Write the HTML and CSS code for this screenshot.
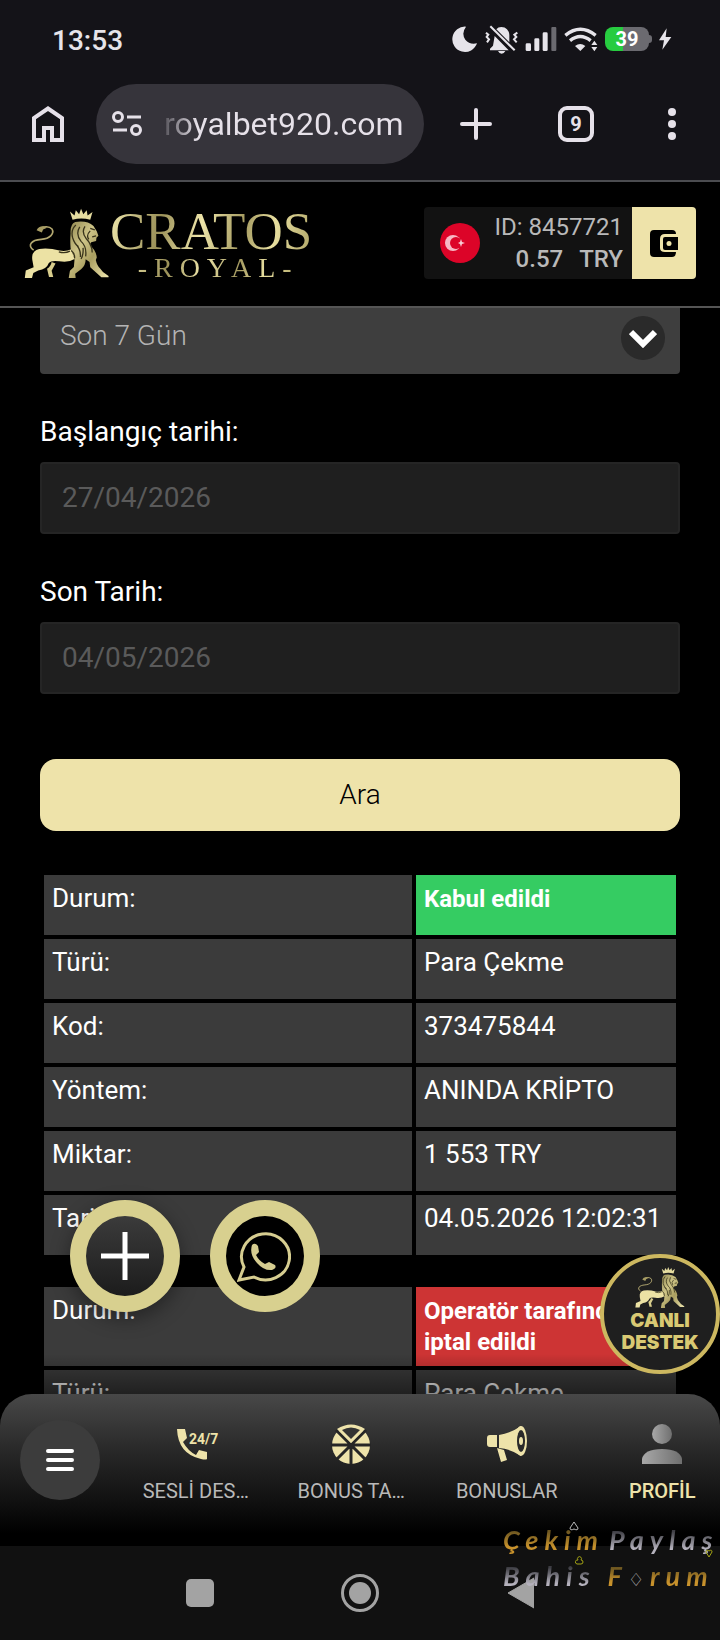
FILE: index.html
```html
<!DOCTYPE html>
<html lang="tr">
<head>
    <meta charset="UTF-8">
    <meta name="viewport" content="width=device-width, initial-scale=1.0">
    <title>Cratos Royal</title>
    <link rel="stylesheet" href="styles.css">
</head>
<body>
    <!-- ortak aslan simgesi -->
    <svg class="defs" width="0" height="0" aria-hidden="true">
        <defs>
            <linearGradient id="gold" x1="0" y1="0" x2="1" y2="1">
                <stop offset="0" stop-color="#8f864f"/>
                <stop offset=".35" stop-color="#cfc588"/>
                <stop offset=".6" stop-color="#a99e60"/>
                <stop offset="1" stop-color="#f3ebb4"/>
            </linearGradient>
            <linearGradient id="silver" x1="0" y1="0" x2="1" y2="0">
                <stop offset="0" stop-color="#a8a8a8"/>
                <stop offset="1" stop-color="#6f6f6f"/>
            </linearGradient>
        </defs>
        <symbol id="lion" viewBox="74 82 262 214">
            <path d="M222 118 214 93l14 12 4-16 10 12 6-17 7 17 10-12 3 16 15-11-7 24q-27-8-54 0z" fill="#e6dda0"/>
            <path d="M103 211C82 196 96 180 126 178c28-2 41-18 33-32-8-9-26-8-36-2" fill="none" stroke="#b3a870" stroke-width="5"/>
            <path d="M112 150q6-13 22-12l10 4-12 6-4 9z" fill="#a79c63"/>
            <path d="M120 207q30-4 62 5 20 4 36-4l10 30q-18 12-47 7-24-4-32 6-6 18-32 22l-15 8-4 15H76l3-23 24-10-4-22q-4-28 21-34z" fill="#ece2a4"/>
            <path d="M216 205q-2-24 0-45-2-28 14-35 36-6 56 12l10 16 5 14-6 6-1 10-15 4-5 8q20 16 22 38l-3 8q4 18 14 27l8 10 17 12v4h-22l-34-31-2-16-12-8q0 20-14 30l-18 14 2 17-21 2-1-5 4-23 12-12 2-22z" fill="url(#gold)"/>
            <path d="M158 247l12 5-12 22 5 19h-13l-6-25q12-8 14-21z" fill="#d8cd8c"/>
            <path d="M180 216q18 6 34-2M232 134q-16 14-10 38 6 20 18 28M244 140q-14 22 4 44 18 16 14 46M260 138q-12 18 4 38 18 18 18 42M276 152q-14 14-4 26M230 190q18 18 16 42M276 144l14 5M282 170l12-3M218 212q12 10 10 24M254 204q2 20-6 34" fill="none" stroke="#39341b" stroke-width="4"/>
        </symbol>
    </svg>

    <div class="status-bar">
        <span class="clock">13:53</span>
        <div class="status-icons">
            <svg width="26" height="26" viewBox="276 78 78 78" fill="#e6e4ea"><path d="M318 80a38 38 0 1 0 33 50q-22 5-35-11-13-19 2-39z"/></svg>
            <svg width="33" height="29" viewBox="373 70 99 87" fill="#e6e4ea">
                <path d="M407 83q5-7 15-7 22 1 24 24v22zM402 103l42 43h-56v-5l9-9zM412 148h22q-4 8-11 8t-11-8z"/>
                <path d="M389 74l73 72" stroke="#e6e4ea" stroke-width="6"/>
                <path d="M376 93l7 6-5 7 7 7-6 9M470 93l-9 6 6 7-7 7 8 9" fill="none" stroke="#e6e4ea" stroke-width="6"/>
            </svg>
            <svg width="32" height="26" viewBox="497 78 96 78" fill="#e6e4ea"><rect x="499" y="130" width="16" height="23" rx="4"/><rect x="525" y="115" width="15" height="38" rx="4"/><rect x="550" y="97" width="15" height="56" rx="4"/><rect x="576" y="81" width="15" height="72" rx="3" fill="#6b6a70"/></svg>
            <svg width="34" height="26" viewBox="617 78 102 78">
                <path d="M621 106q45-36 91 0M635 122q31-25 62 0" fill="none" stroke="#e6e4ea" stroke-width="10"/>
                <path d="M650 138q16-12 31 0l-15 15zM708 122l9 13h-18zM708 154l9-13h-18z" fill="#e6e4ea"/>
            </svg>
            <span class="battery">39</span>
            <svg width="13" height="22" viewBox="895 85 39 66" fill="#e6e4ea"><path d="M918 86l-23 36h15l-5 28 27-38h-17z"/></svg>
        </div>
    </div>

    <div class="toolbar">
        <button class="tool" aria-label="Ana sayfa"><svg width="32" height="36" viewBox="0 0 32 36" fill="none" stroke="#e6e1e9" stroke-width="4"><path d="M2 34V12L16 2.500 30 12v22H20V22h-8v12z"/></svg></button>
        <button class="address">
            <svg width="30" height="26" viewBox="0 0 30 26" fill="none" stroke="#e6e1e9" stroke-width="3"><circle cx="6" cy="6" r="4.500"/><path d="M15 6h14M1 19h14"/><circle cx="24" cy="19" r="4.500"/></svg>
            <span>royalbet920.com</span>
        </button>
        <button class="tool wide" aria-label="Yeni sekme"><svg width="32" height="32" viewBox="0 0 32 32" stroke="#e6e1e9" stroke-width="4" stroke-linecap="round"><path d="M16 2v28M2 16h28"/></svg></button>
        <button class="tool tabs" aria-label="Sekmeler"><span>9</span></button>
        <button class="tool" aria-label="Menü"><svg width="8" height="32" viewBox="0 0 8 32" fill="#e6e1e9"><circle cx="4" cy="4" r="4"/><circle cx="4" cy="16" r="4"/><circle cx="4" cy="28" r="4"/></svg></button>
    </div>

    <header>
        <a class="logo" href="#">
            <svg width="86" height="70"><use href="#lion"/></svg>
            <span class="logo-text">
                <b>CRATOS</b>
                <i>-ROYAL-</i>
            </span>
        </a>
        <div class="account">
            <svg width="40" height="40" viewBox="0 0 40 40"><circle cx="20" cy="20" r="20" fill="#dc0428"/><circle cx="13" cy="20" r="8" fill="#f7b8c4"/><circle cx="16" cy="20" r="6" fill="#dc0428"/><path d="M21 16l1 3 3 1-3 1-1 3-1-3-2-1 2-1z" fill="#f9cdd5"/></svg>
            <div class="balance">
                <div>ID: 8457721</div>
                <div class="money"><span>0.57</span><span>TRY</span></div>
            </div>
            <button class="wallet" aria-label="Cüzdan"><svg width="28" height="27" viewBox="0 0 28 27"><path d="M4 0h18q4 0 4 4H15q-5 0-5 5v9q0 4 5 4h11q0 5-4 5H4q-4 0-4-4V4q0-4 4-4z"/><path d="M15 7h13v13H15q-2 0-2-2V9q0-2 2-2z"/><circle cx="19" cy="13.500" r="2.500" fill="#eee3aa"/></svg></button>
        </div>
    </header>

    <main>
        <form class="filter">
            <div class="select-box">
                <select aria-label="Dönem">
                    <option>Son 7 Gün</option>
                </select>
                <span class="arrow"><svg width="28" height="19" viewBox="0 0 28 19" fill="none" stroke="#fff" stroke-width="6"><path d="M2 3l12 12L26 3"/></svg></span>
            </div>
            <label for="start">Başlangıç tarihi:</label>
            <input type="text" id="start" value="27/04/2026">
            <label for="end">Son Tarih:</label>
            <input type="text" id="end" value="04/05/2026">
            <button type="submit">Ara</button>
        </form>

        <table>
            <tr><th>Durum:</th><td class="ok">Kabul edildi</td></tr>
            <tr><th>Türü:</th><td>Para Çekme</td></tr>
            <tr><th>Kod:</th><td>373475844</td></tr>
            <tr><th>Yöntem:</th><td>ANINDA KRİPTO</td></tr>
            <tr><th>Miktar:</th><td>1 553 TRY</td></tr>
            <tr><th>Tarih:</th><td>04.05.2026 12:02:31</td></tr>
        </table>
        <table>
            <tr><th>Durum:</th><td class="cancel">Operatör tarafından iptal edildi</td></tr>
            <tr><th>Türü:</th><td>Para Çekme</td></tr>
        </table>

        <div class="fabs">
            <button class="fab" aria-label="Aç"><svg width="48" height="48" viewBox="0 0 48 48" stroke="#fff" stroke-width="5"><path d="M24 0v48M0 24h48"/></svg></button>
            <a class="fab whatsapp" href="#" aria-label="WhatsApp"><svg width="54" height="52" viewBox="0 0 54 52"><path d="M2 50l5-13A24 23 0 1 1 17 47z" fill="none" stroke="#d6cd90" stroke-width="3"/><path d="M15 15q3-3 6 1l1 6-3 3q3 6 9 9l4-2 6 3q2 3-3 5-8 1-15-7-8-9-5-18z" fill="#d6cd90"/></svg></a>
        </div>
        <button class="live">
            <svg width="50" height="42"><use href="#lion"/></svg>
            <span>CANLI</span>
            <span>DESTEK</span>
        </button>
    </main>

    <nav class="bottom-nav">
        <button class="menu" aria-label="Menü"><svg width="28" height="22" viewBox="0 0 28 22" stroke="#fff" stroke-width="4" stroke-linecap="round"><path d="M2 2h24M2 11h24M2 20h24"/></svg></button>
        <div class="items">
            <a href="#">
                <svg width="46" height="40" viewBox="0 0 46 40"><path d="M4 5h8l2 9-4 4q5 9 13 13l3-5 8 2v7q-1 1-6 0Q5 30 4 5z" fill="#eee3aa"/><text x="16" y="20" class="tiny">24/7</text></svg>
                <span>SESLİ DES…</span>
            </a>
            <a href="#">
                <svg width="40" height="40" viewBox="0 0 40 40"><circle cx="20" cy="21" r="19" fill="#eee3aa"/><path d="M20 21v20M0 21h40M20 21L5 6M20 21L35 6M20 21L6 35M20 21l14 14" stroke="#262626" stroke-width="3"/><path d="M6 5q14-9 28 0L20 19z" fill="#eee3aa"/><path d="M11 6q9-5 18 0l-9 9z" fill="#333"/><circle cx="20" cy="22" r="3" fill="#262626"/></svg>
                <span>BONUS TA…</span>
            </a>
            <a href="#">
                <svg width="40" height="40" viewBox="0 0 40 40" fill="#eee3aa"><path d="M3 11h7v12H3q-3 0-3-3v-6q0-3 3-3zM12 11q12-2 22-9v30q-10-7-22-8zM10 24l7 2 3 10-6 2z"/><ellipse cx="34" cy="17" rx="6" ry="15"/><ellipse cx="34" cy="17" rx="4" ry="11" fill="#2a2a2a"/><ellipse cx="34" cy="17" rx="2" ry="4"/></svg>
                <span>BONUSLAR</span>
            </a>
            <a href="#" class="active">
                <svg width="40" height="40" viewBox="0 0 40 40" fill="url(#silver)"><circle cx="20" cy="10" r="10"/><path d="M0 40v-5q2-10 20-10t20 10v5z"/></svg>
                <span>PROFİL</span>
            </a>
        </div>
    </nav>

    <div class="system-nav">
        <button aria-label="Son uygulamalar"><svg width="28" height="28"><rect width="28" height="28" rx="5" fill="#a3a3a3"/></svg></button>
        <button aria-label="Ana ekran"><svg width="38" height="38" viewBox="0 0 38 38"><circle cx="19" cy="19" r="17.500" fill="none" stroke="#a3a3a3" stroke-width="3"/><circle cx="19" cy="19" r="11" fill="#a3a3a3"/></svg></button>
        <button aria-label="Geri"><svg width="27" height="32" viewBox="0 0 27 32"><path d="M27 1v30L1 16z" fill="#a3a3a3" stroke="#a3a3a3" stroke-linejoin="round"/></svg></button>
        <div class="watermark">
            <div class="mark-top"><span class="amber">Çekim</span><span class="grey">Paylaş</span></div>
            <div><span class="grey">Bahis</span> <span class="amber">F</span><span class="suit">♢</span><span class="amber">rum</span></div>
            <svg class="suits" width="150" height="50" viewBox="0 0 150 50" fill="none"><path d="M10 0l4 6q0 3-4 1-4 2-4-1z" stroke="#bbb"/><path d="M14 38a2 2 0 1 1 3 0 2 2 0 1 1 0 4h-4a2 2 0 1 1 1-4z" stroke="#a3a314"/><path d="M145 35l-3-5q0-3 3-1 3-2 3 1z" stroke="#a3a314"/></svg>
        </div>
    </div>
</body>
</html>
```
FILE: styles.css
```css
* {
    box-sizing: border-box;
}

body {
    margin: 0;
    height: 100vh;
    display: flex;
    flex-direction: column;
    overflow: hidden;
    background: #000;
    color: #fff;
    font-family: Roboto, "Liberation Sans", sans-serif;
    font-size: 26px;
}

button, input, select {
    font-family: inherit;
    font-size: inherit;
    margin: 0;
}

button {
    border: none;
    padding: 0;
    background: none;
    color: inherit;
    cursor: pointer;
}

a {
    color: inherit;
    text-decoration: none;
}

svg {
    display: block;
    flex-shrink: 0;
}

.defs {
    position: absolute;
}

/* telefon durum çubuğu */
.status-bar {
    display: flex;
    align-items: center;
    justify-content: space-between;
    height: 80px;
    padding: 0 48px 0 52px;
    background: #141318;
    flex-shrink: 0;
}

.clock {
    font-size: 28px;
    font-weight: 500;
    color: #e6e4ea;
}

.status-icons {
    display: flex;
    align-items: center;
    gap: 7px;
    padding-bottom: 2px;
}

.battery {
    position: relative;
    width: 44px;
    height: 24px;
    margin-right: 3px;
    border-radius: 8px;
    background: linear-gradient(90deg, #27cc40 42%, #6b6a70 42%);
    font-size: 20px;
    font-weight: 700;
    line-height: 25px;
    text-align: center;
}

.battery::after {
    content: "";
    position: absolute;
    left: 44px;
    top: 8px;
    width: 3px;
    height: 8px;
    border-radius: 0 3px 3px 0;
    background: #6b6a70;
}

/* tarayıcı çubuğu */
.toolbar {
    display: flex;
    align-items: center;
    padding: 4px 0 16px;
    background: #141318;
    border-bottom: 2px solid #4b4c50;
    flex-shrink: 0;
}

.tool {
    display: flex;
    align-items: center;
    justify-content: center;
    width: 96px;
    height: 80px;
}

.wide {
    width: 104px;
}

.address {
    display: flex;
    align-items: center;
    gap: 22px;
    flex: 1;
    height: 80px;
    padding-left: 16px;
    border-radius: 40px;
    background: #36343b;
    font-size: 32px;
    overflow: hidden;
}

.address span {
    background: linear-gradient(90deg, #55535a, #e6e1e9 14%);
    background-clip: text;
    -webkit-background-clip: text;
    color: transparent;
}

.tabs span {
    width: 36px;
    height: 36px;
    border: 4px solid #e6e1e9;
    border-radius: 9px;
    font-size: 20px;
    font-weight: 700;
    line-height: 28px;
    color: #e6e1e9;
}

header {
    display: flex;
    align-items: center;
    justify-content: space-between;
    height: 126px;
    padding: 0 24px 2px;
    border-bottom: 2px solid #555;
    flex-shrink: 0;
}

.logo {
    display: flex;
    align-items: center;
}

.logo-text {
    display: flex;
    flex-direction: column;
    align-items: center;
    padding-top: 4px;
    font-family: "Liberation Serif", serif;
}

.logo-text b, .logo-text i {
    font-weight: 400;
    font-style: normal;
    background: linear-gradient(100deg, #f0e8ac, #9a9058 25%, #efe6aa 45%, #a49a60 65%, #e8dfa0 80%, #b0a668);
    background-clip: text;
    -webkit-background-clip: text;
    color: transparent;
}

.logo-text b {
    font-size: 53px;
    line-height: 46px;
}

.logo-text i {
    padding-left: 14px;
    font-size: 28px;
    line-height: 28px;
    letter-spacing: 7px;
}

.account {
    display: flex;
    align-items: center;
    height: 72px;
    padding-left: 16px;
    border-radius: 4px;
    background: #121212;
    overflow: hidden;
}

.balance {
    padding: 0 9px 0 15px;
    font-size: 24px;
    line-height: 32px;
    text-align: right;
    color: #b9b9b9;
}

.money {
    display: flex;
    justify-content: flex-end;
    gap: 16px;
    font-weight: 500;
}

.wallet {
    display: flex;
    align-items: center;
    justify-content: center;
    width: 64px;
    height: 72px;
    background: #eee3aa;
}

/* hesap hareketleri */
main {
    position: relative;
    flex: 1;
    min-height: 0;
    padding: 0 40px;
    overflow: hidden;
}

main::after {
    content: "";
    position: absolute;
    left: 0;
    right: 0;
    bottom: 0;
    height: 40px;
    background: linear-gradient(transparent, rgba(0, 0, 0, 0.45));
}

.filter {
    display: flex;
    flex-direction: column;
    margin-top: -6px;
}

.select-box {
    position: relative;
}

.select-box select {
    appearance: none;
    width: 100%;
    height: 72px;
    padding: 0 20px 6px;
    border: none;
    border-radius: 4px;
    background: #3e3e3e;
    color: #b4b4b4;
    font-weight: 300;
    font-size: 28px;
}

.arrow {
    position: absolute;
    right: 15px;
    top: 14px;
    display: flex;
    align-items: center;
    justify-content: center;
    width: 44px;
    height: 44px;
    border-radius: 50%;
    background: #2a2a2a;
    pointer-events: none;
}

.filter label {
    margin: 40px 0 12px;
    font-size: 28px;
    line-height: 36px;
}

.filter input {
    height: 72px;
    padding: 0 20px 2px;
    border: 2px solid #252525;
    border-radius: 4px;
    background: #1f1f1f;
    color: #5a5a5a;
    font-size: 28px;
}

.filter button {
    height: 72px;
    margin: 65px 0 40px;
    padding-bottom: 2px;
    border-radius: 16px;
    background: #eee3aa;
    color: #000;
    font-size: 28px;
    font-weight: 300;
}

table {
    width: 100%;
    margin-bottom: 24px;
    border-spacing: 4px;
    table-layout: fixed;
}

th, td {
    height: 60px;
    padding: 8px;
    background: #3b3b3b;
    font-weight: 400;
    line-height: 31px;
    text-align: left;
    vertical-align: top;
}

th {
    width: 368px;
}

.ok, .cancel {
    padding: 9px 8px 8px;
    font-size: 24px;
    font-weight: 700;
}

.ok {
    background: #35cc62;
}

.cancel {
    background: #cd3434;
}

/* yüzen düğmeler */
.fabs {
    position: absolute;
    left: 70px;
    bottom: 82px;
    z-index: 1;
    display: flex;
    gap: 30px;
}

.fab {
    display: flex;
    align-items: center;
    justify-content: center;
    width: 110px;
    height: 112px;
    border: 16px solid #d8d08f;
    border-radius: 50%;
    background: linear-gradient(#3b3b3b, #1c1c1c);
    box-shadow: 0 6px 20px rgba(0, 0, 0, 0.4);
}

.whatsapp {
    padding-right: 2px;
    background: #000;
    box-shadow: none;
}

.live {
    position: absolute;
    right: 0;
    bottom: 20px;
    z-index: 1;
    display: flex;
    flex-direction: column;
    align-items: center;
    width: 120px;
    height: 120px;
    padding-top: 8px;
    border: 4px solid #cdb860;
    border-radius: 50%;
    background: #1f1f1f;
    color: #d9c973;
    font-family: Inter, sans-serif;
    font-size: 19px;
    font-weight: 900;
    line-height: 22px;
}

.live svg {
    margin-bottom: 2px;
}

/* alt menü */
.bottom-nav {
    display: flex;
    align-items: center;
    height: 152px;
    padding: 0 0 20px 20px;
    border-radius: 32px 32px 0 0;
    background: linear-gradient(#484848, #262626 40%, #111 70%, #000 92%);
    overflow: hidden;
    flex-shrink: 0;
}

.menu {
    display: flex;
    align-items: center;
    justify-content: center;
    width: 80px;
    height: 80px;
    border-radius: 50%;
    background: #3c3c3c;
    flex-shrink: 0;
}

.items {
    display: flex;
    flex: 1;
    margin: 8px -20px 0 18px;
}

.items a {
    display: flex;
    flex-direction: column;
    align-items: center;
    gap: 14px;
    flex: 1;
    font-size: 20px;
    line-height: 26px;
    color: #b9b9b9;
}

.items .active {
    color: #eee3aa;
    font-weight: 500;
}

.tiny {
    font-family: Roboto, sans-serif;
    font-size: 14px;
    font-weight: 700;
    fill: #eee3aa;
}

/* android gezinme çubuğu */
.system-nav {
    position: relative;
    display: flex;
    justify-content: center;
    height: 94px;
    background: #111;
    flex-shrink: 0;
}

.system-nav button {
    display: flex;
    align-items: center;
    justify-content: center;
    width: 160px;
}

.watermark {
    position: absolute;
    top: -24px;
    right: 0;
    width: 217px;
    font-family: Lato, sans-serif;
    font-size: 27px;
    font-style: italic;
    font-weight: 700;
    line-height: 36px;
    letter-spacing: 6px;
    white-space: nowrap;
    pointer-events: none;
}

.mark-top {
    display: flex;
    gap: 5px;
}

.amber, .grey {
    background: linear-gradient(#6b5520 25%, #c8922c 70%);
    background-clip: text;
    -webkit-background-clip: text;
    color: transparent;
}

.grey {
    background-image: linear-gradient(#3c3c42 25%, #b5b2bd 75%);
}

.suit {
    font-family: "DejaVu Sans", sans-serif;
    font-size: 18px;
    font-style: normal;
    font-weight: 400;
    color: #ccc;
}

.suits {
    position: absolute;
    left: 61px;
    top: 0;
}
```
